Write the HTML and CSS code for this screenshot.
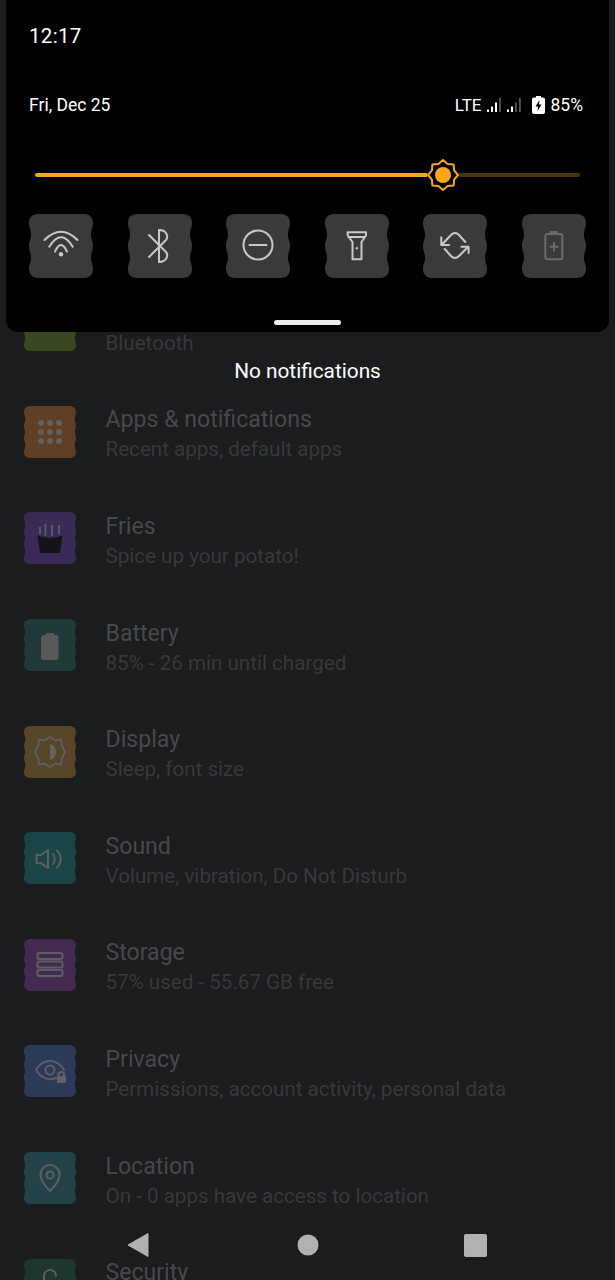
FILE: index.html
```html
<!DOCTYPE html>
<html>
<head>
  <meta charset="utf-8">
  <meta name="viewport" content="width=device-width, initial-scale=1">
  <title>Settings</title>
  <link rel="stylesheet" href="styles.css">
</head>
<body>
  <svg class="defs" width="0" height="0">
    <symbol id="wave" viewBox="0 0 64 64">
      <path d="M9 0H55C60 0 64 3 64 9C64 14 62 15.500 62 20.500C62 25.500 64 27 64 32C64 37 62 38.500 62 43.500C62 48.500 64 50 64 55C64 61 60 64 55 64H9C4 64 0 61 0 55C0 50 2 48.500 2 43.500C2 38.500 0 37 0 32C0 27 2 25.500 2 20.500C2 15.500 0 14 0 9C0 3 4 0 9 0Z"/>
    </symbol>
    <symbol id="wave-small" viewBox="0 0 52 52">
      <path d="M7 0H45C49 0 52 2 52 6C52 9 50.800 10 50.800 13C50.800 16 52 17 52 20C52 23 50.800 23.500 50.800 26C50.800 28.500 52 29 52 32C52 35 50.800 36 50.800 39C50.800 42 52 43 52 46C52 50 49 52 45 52H7C3 52 0 50 0 46C0 43 1.200 42 1.200 39C1.200 36 0 35 0 32C0 29 1.200 28.500 1.200 26C1.200 23.500 0 23 0 20C0 17 1.200 16 1.200 13C1.200 10 0 9 0 6C0 2 3 0 7 0Z"/>
    </symbol>
  </svg>

  <!-- settings list, dimmed behind the shade -->
  <main class="list">
    <div class="row">
      <svg class="ico c-green" viewBox="0 0 52 52"><use href="#wave-small"/><path class="line" d="M14 30H38" stroke-width="3"/></svg>
      <div class="txt"><div class="title">Connected devices</div><div class="sub">Bluetooth</div></div>
    </div>
    <div class="row">
      <svg class="ico c-orange" viewBox="0 0 52 52"><use href="#wave-small"/>
        <g class="solid"><circle cx="17" cy="17" r="3"/><circle cx="26" cy="17" r="3"/><circle cx="35" cy="17" r="3"/><circle cx="17" cy="26" r="3"/><circle cx="26" cy="26" r="3"/><circle cx="35" cy="26" r="3"/><circle cx="17" cy="35" r="3"/><circle cx="26" cy="35" r="3"/><circle cx="35" cy="35" r="3"/></g>
      </svg>
      <div class="txt"><div class="title">Apps &amp; notifications</div><div class="sub">Recent apps, default apps</div></div>
    </div>
    <div class="row">
      <svg class="ico c-purple" viewBox="0 0 52 52"><use href="#wave-small"/>
        <path class="dark-line" d="M16 15V22M21.500 12V24M28 13V24M35 13V22"/>
        <path class="dark" d="M13.500 23.500L18 25 26 26 34 25 38.500 23.500 36 41H16Z"/>
      </svg>
      <div class="txt"><div class="title">Fries</div><div class="sub">Spice up your potato!</div></div>
    </div>
    <div class="row">
      <svg class="ico c-teal" viewBox="0 0 52 52"><use href="#wave-small"/>
        <path class="solid" d="M22 14H30V16H32C33.500 16 34.500 17 34.500 18.500V38.500C34.500 40 33.500 41 32 41H20C18.500 41 17 40 17 38.500V18.500C17 17 18.500 16 20 16H22Z"/>
      </svg>
      <div class="txt"><div class="title">Battery</div><div class="sub">85% - 26 min until charged</div></div>
    </div>
    <div class="row">
      <svg class="ico c-amber" viewBox="0 0 52 52"><use href="#wave-small"/>
        <path class="line" d="M26 11L31 14.200 37 13.500 38 19.800 41 26 38 32.200 37 38.500 31 37.800 26 41 21 37.800 15 38.500 14 32.200 11 26 14 19.800 15 13.500 21 14.200Z"/>
        <path class="solid" d="M26 18C30 19 32 22 32 26C32 30 30 33 26 34Z"/>
      </svg>
      <div class="txt"><div class="title">Display</div><div class="sub">Sleep, font size</div></div>
    </div>
    <div class="row">
      <svg class="ico c-cyan" viewBox="0 0 52 52"><use href="#wave-small"/>
        <path class="line" d="M12.500 23H17L24 18V36L17 31H12.500ZM29 22C31 25 31 29 29 32M33 18.500C38 23 38 31 33 35.500"/>
      </svg>
      <div class="txt"><div class="title">Sound</div><div class="sub">Volume, vibration, Do Not Disturb</div></div>
    </div>
    <div class="row">
      <svg class="ico c-plum" viewBox="0 0 52 52"><use href="#wave-small"/>
        <g class="line"><rect x="13.500" y="14" width="25" height="6" rx="1.500"/><rect x="13.500" y="22.500" width="25" height="6" rx="1.500"/><rect x="13.500" y="31" width="25" height="6" rx="1.500"/></g>
      </svg>
      <div class="txt"><div class="title">Storage</div><div class="sub">57% used - 55.67 GB free</div></div>
    </div>
    <div class="row">
      <svg class="ico c-blue" viewBox="0 0 52 52"><use href="#wave-small"/>
        <path class="line" d="M12 25C19 13 33 13 40 25M12 25C17 33 25 36 32 33"/>
        <circle class="line" cx="26" cy="25" r="4.500"/>
        <path class="line" d="M34.500 31V29.500C34.500 26 40 26 40 29.500V31"/>
        <rect class="solid" x="33" y="31" width="9" height="7" rx="1"/>
      </svg>
      <div class="txt"><div class="title">Privacy</div><div class="sub">Permissions, account activity, personal data</div></div>
    </div>
    <div class="row">
      <svg class="ico c-steel" viewBox="0 0 52 52"><use href="#wave-small"/>
        <path class="line" d="M26 39C20 33 16.500 28 16.500 23C16.500 17 21 13 26 13C31 13 35.500 17 35.500 23C35.500 28 32 33 26 39Z"/>
        <circle class="line" cx="26" cy="23" r="3.500"/>
      </svg>
      <div class="txt"><div class="title">Location</div><div class="sub">On - 0 apps have access to location</div></div>
    </div>
    <div class="row">
      <svg class="ico c-moss" viewBox="0 0 52 52"><use href="#wave-small"/>
        <path class="line" d="M20 22V17C20 13 23 11 26 11C29 11 32 13 32 17M15 22H37V40H15Z"/>
      </svg>
      <div class="txt"><div class="title">Security</div><div class="sub">&nbsp;</div></div>
    </div>
  </main>

  <!-- pulled-down quick settings -->
  <section class="shade">
    <div class="clock">12:17</div>
    <div class="info">
      <span>Fri, Dec 25</span>
      <div class="status">
        <span class="lte">LTE</span>
        <svg class="signal" width="15" height="16" viewBox="0 0 15 16"><path class="on" d="M1 12.500h2v2.500H1zM5 9.500h2v5.500H5z"/><path class="on" d="M9 5.500h2v9.500H9z"/><path class="off" d="M13 1h1.800v14H13z"/></svg>
        <svg class="signal sig2" width="15" height="16" viewBox="0 0 15 16"><path class="on" d="M1 12.500h2v2.500H1zM5 9.500h2v5.500H5z"/><path class="off" d="M9 5.500h1.800v9.500H9zM13 1h1.800v14H13z"/></svg>
        <svg class="batt" width="13" height="18" viewBox="0 0 13 18"><path fill="#fff" d="M4 0H9V1.500H11C12.200 1.500 13 2.300 13 3.500V16C13 17.200 12.200 18 11 18H2C.8 18 0 17.200 0 16V3.500C0 2.300 .8 1.500 2 1.500H4Z"/><path fill="#000" d="M7.500 4L3.500 10.500H6L5.500 15 9.500 8.500H7Z"/></svg>
        <span>85%</span>
      </div>
    </div>

    <div class="slider">
      <div class="fill"></div>
      <svg class="thumb" width="32" height="32" viewBox="0 0 32 32">
        <path fill="none" stroke="#f5a623" stroke-width="2" stroke-linejoin="round" d="M16 1L20.600 4.900 26.600 5.400 27.100 11.400 31 16 27.100 20.600 26.600 26.600 20.600 27.100 16 31 11.400 27.100 5.400 26.600 4.900 20.600 1 16 4.900 11.400 5.400 5.400 11.400 4.900Z"/>
        <circle cx="16" cy="16" r="8" fill="#f9a81a"/>
      </svg>
      <div class="rest"></div>
    </div>

    <div class="tiles">
      <svg class="tile" viewBox="0 0 64 64"><use href="#wave"/>
        <path d="M15.500 26Q32 9.500 48.500 26M20.300 32.700Q32 14 43.700 32.700M26 37.700Q32 24.500 38 37.700"/>
        <circle class="dot" cx="32" cy="40.300" r="2.200"/>
      </svg>
      <svg class="tile" viewBox="0 0 64 64"><use href="#wave"/>
        <path d="M21 21L38 38C40.500 41 39 48 31 48V16C39 16 40.500 23 38 26L21 43"/>
      </svg>
      <svg class="tile" viewBox="0 0 64 64"><use href="#wave"/>
        <circle cx="32" cy="31" r="14.500"/><path d="M23.500 31H40.500"/>
      </svg>
      <svg class="tile" viewBox="0 0 64 64"><use href="#wave"/>
        <path d="M22.700 18.300H41V21.500L36.500 28V45.300H27.500V28L22.700 21.500ZM23.500 23H40"/>
        <circle class="dot" cx="31.800" cy="34.300" r="1.200"/>
      </svg>
      <svg class="tile" viewBox="0 0 64 64"><use href="#wave"/>
        <path d="M18.300 23.300V31H26M19.500 30L28 21Q32 17 36 21L42.300 28M45.600 39V32.700H38.500M44.500 33.500L36 42Q32 46 28 42L21.700 35"/>
      </svg>
      <svg class="tile dim" viewBox="0 0 64 64"><use href="#wave"/>
        <path d="M25.500 20H38.500C39.600 20 40.300 20.700 40.300 22V43.300C40.300 44.600 39.600 45.300 38.500 45.300H25.500C24.300 45.300 23.300 44.600 23.300 43.300V22C23.300 20.700 24.300 20 25.500 20ZM28.500 18H35.500M32 29V36.500M28.200 32.700H35.800"/>
      </svg>
    </div>

    <div class="handle"></div>
  </section>

  <div class="empty">No notifications</div>

  <nav class="nav">
    <svg width="22" height="26" viewBox="0 0 22 26"><path d="M21 1.500V24.500L1 13Z" stroke="#b1b1b1" stroke-width="1" stroke-linejoin="round"/></svg>
    <svg class="home" width="22" height="22" viewBox="0 0 22 22"><circle cx="11" cy="11" r="10.500"/></svg>
    <svg width="23" height="23" viewBox="0 0 23 23"><rect width="23" height="23" rx="2"/></svg>
  </nav>
</body>
</html>
```

FILE: styles.css
```css
html, body { margin: 0; padding: 0; }
body {
  position: relative;
  width: 615px;
  height: 1280px;
  overflow: hidden;
  background: #1b1c1e;
  font-family: Roboto, "Liberation Sans", sans-serif;
}
.defs { position: absolute; }

/* list */
.list { padding-top: 272px; }
.row { display: flex; align-items: center; gap: 29.5px; height: 106.6px; padding-left: 24px; }
.ico { width: 52px; height: 52px; flex: none; }
.txt { padding-top: 5px; }
.title { font-size: 23.1px; line-height: 32px; margin-bottom: -2px; color: #48494b; }
.sub { font-size: 20.6px; line-height: 30px; color: #38393b; white-space: nowrap; }

.c-green use { fill: #394820; }
.c-orange use { fill: #5f4027; }
.c-purple use { fill: #392b55; }
.c-teal use { fill: #1f3a39; }
.c-amber use { fill: #574629; }
.c-cyan use { fill: #1b4446; }
.c-plum use { fill: #442a50; }
.c-blue use { fill: #2c3a59; }
.c-steel use { fill: #234248; }
.c-moss use { fill: #1e362b; }

.solid { fill: #626262; }
.line { fill: none; stroke: #5e5f60; stroke-width: 2; stroke-linejoin: round; stroke-linecap: round; }
.c-teal .solid { fill: #585a5a; }
.dark { fill: #141318; }
.dark-line { fill: none; stroke: #5a5663; stroke-width: 2; }

/* shade */
.shade {
  position: absolute;
  top: 0;
  left: 6px;
  width: 603px;
  height: 332px;
  box-sizing: border-box;
  padding: 24px 23px 0;
  background: #000;
  border-radius: 0 0 12px 12px;
  color: #fff;
}
.clock { font-size: 20.5px; line-height: 24px; letter-spacing: .3px; }
.info { display: flex; justify-content: space-between; align-items: center; height: 24px; margin-top: 45px; margin-right: 3px; font-size: 17.5px; }
.status { display: flex; align-items: center; }
.lte { margin-right: 4px; font-size: 17px; }
.signal { margin-right: 5px; }
.sig2 { margin-right: 11px; }
.batt { margin-right: 6px; }
.on { fill: #fff; }
.off { fill: #555; }

.slider { display: flex; align-items: center; height: 32px; margin: 42px 6px 0; }
.fill { width: 392px; height: 4px; background: #f5a623; border-radius: 2px 0 0 2px; }
.rest { flex: 1; height: 4px; background: #4a3410; border-radius: 0 2px 2px 0; }
.thumb { flex: none; }

.tiles { display: flex; justify-content: space-between; margin-top: 23px; }
.tile { width: 64px; height: 64px; }
.tile use { fill: #3a3a3a; }
.tile path, .tile circle { fill: none; stroke: #c9c9c9; stroke-width: 2; stroke-linecap: round; stroke-linejoin: round; }
.tile .dot { fill: #c9c9c9; stroke: none; }
.tile.dim path { stroke: #6b6b6b; }

.handle { width: 67px; height: 5px; margin: 42px auto 0; background: #eee; border-radius: 3px; }

.empty {
  position: absolute;
  top: 359px;
  left: 0;
  right: 0;
  text-align: center;
  font-size: 20.8px;
  line-height: 24px;
  color: #fff;
}

/* system buttons */
.nav {
  position: absolute;
  top: 1232px;
  left: 127px;
  width: 360px;
  height: 26px;
  display: flex;
  justify-content: space-between;
  align-items: center;
}
.nav svg { fill: #b1b1b1; }
.home { margin-left: 2px; }
```
